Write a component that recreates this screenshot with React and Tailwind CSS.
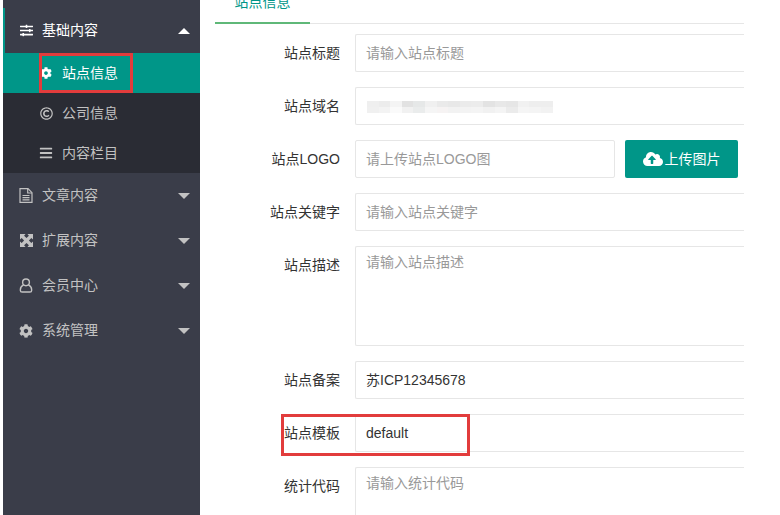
import React from "react";
import { FaSlidersH, FaCog, FaRegCopyright, FaBars, FaCloudUploadAlt } from "react-icons/fa";

function UserIcon({ size }) {
  return (
    <svg width={size} height={size} viewBox="0 0 14 16" fill="none" stroke="currentColor" strokeWidth="1.5">
      <circle cx="7" cy="4.6" r="3.6" />
      <path d="M4.4 7.4C2.4 8.4 1 10 1 12.2V13.2C1 14.3 1.8 15 2.8 15H11.2C12.2 15 13 14.3 13 13.2V12.2C13 10 11.6 8.4 9.6 7.4" />
    </svg>
  );
}

function FileIcon({ size }) {
  return (
    <svg width={size} height={size} viewBox="0 0 14 15" fill="none" stroke="currentColor" strokeWidth="1.2">
      <path d="M1 .7H9L13 4.7V14.3H1Z" />
      <path d="M8.7 .7V5H13M3.5 7.5H10.5M3.5 9.7H10.5M3.5 11.9H10.5" />
    </svg>
  );
}

function ExpandIcon({ size }) {
  return (
    <svg width={size} height={size} viewBox="0 0 14 14" fill="currentColor">
      <path d="M0 0H6L4.4 1.8 7 4.4 9.6 1.8 8 0H14V6L12.2 4.4 9.6 7 12.2 9.6 14 8V14H8L9.6 12.2 7 9.6 4.4 12.2 6 14H0V8L1.8 9.6 4.4 7 1.8 4.4 0 6Z" />
    </svg>
  );
}

function Caret({ up }) {
  return (
    <span className={`ml-auto mr-[10px] h-0 w-0 border-x-[6px] border-x-transparent ${up ? "border-b-[6px] border-b-white" : "border-t-[6px] border-t-[#c2c2c2]"}`} />
  );
}

function NavItem({ icon: Icon, label, up, size = 14 }) {
  return (
    <div className={`flex h-[45px] items-center pl-[16px] ${up ? "text-white" : "text-[#c2c2c2]"}`}>
      <span className="flex w-[14px] justify-center"><Icon size={size} /></span>
      <span className="ml-[9px]">{label}</span>
      <Caret up={up} />
    </div>
  );
}

function SubItem({ icon: Icon, label, active, size = 13 }) {
  return (
    <div className={`flex h-[40px] items-center pl-[36px] ${active ? "bg-[#009688] text-white" : "text-[#c2c2c2]"}`}>
      <span className="flex w-[14px] justify-center"><Icon size={size} /></span>
      <span className="ml-[9px]">{label}</span>
    </div>
  );
}

function Row({ label, children }) {
  return (
    <div className="flex">
      <div className="w-[125px] shrink-0 pt-[9px] text-right leading-[20px] text-[#333]">{label}</div>
      <div className="w-[15px] shrink-0" />
      {children}
    </div>
  );
}

function Input({ placeholder, value, className = "flex-1 rounded-l-[2px] border-r-0" }) {
  return (
    <div className={`flex h-[38px] items-center border border-[#e6e6e6] bg-white pl-[10px] ${className}`}>
      <span className={value ? "text-[#333]" : "text-[#999]"}>{value || placeholder}</span>
    </div>
  );
}

function Area({ placeholder }) {
  return (
    <div className="h-[100px] flex-1 rounded-l-[2px] border border-r-0 border-[#e6e6e6] bg-white pl-[10px] pt-[4px] leading-[22px] text-[#999]">
      {placeholder}
    </div>
  );
}

const topCells = ["bg-[#efefef]", "bg-[#ececec]", "bg-[#f4f4f4]", "bg-[#e2e2e2]", "bg-[#e6e8e8]", "bg-[#f0f0f0]", "bg-[#eaeaea]", "bg-[#e8e8e8]", "bg-[#ebebeb]", "bg-[#ececec]", "bg-[#e3e3e3]", "bg-[#e8e8e8]", "bg-[#e6e6e6]", "bg-[#f1f1f1]", "bg-[#eeeeee]", "bg-[#eeeeee]"];
const bottomCells = ["bg-[#f0f0f0]", "bg-[#f3f3f3]", "bg-[#fafafa]", "bg-[#f1f1f1]", "bg-[#eaecec]", "bg-[#f5f5f5]", "bg-[#f6f3f3]", "bg-[#f2f2f2]", "bg-[#f3f3f3]", "bg-[#f4f4f4]", "bg-[#f1f1f1]", "bg-[#f4f4f4]", "bg-[#ebebeb]", "bg-[#f5f5f5]", "bg-[#f4f4f4]", "bg-[#f2f2f2]"];

export default function App() {
  return (
    <div className="flex h-[515px] w-[780px] overflow-hidden bg-white text-[14px] [font-family:'Liberation_Sans','Noto_Sans_CJK_SC',sans-serif]">
      <aside className="relative ml-[3px] h-full w-[197px] shrink-0 bg-[#3a3d49] pt-[8px]">
        <span className="absolute left-0 top-[8px] h-[45px] w-[2px] bg-[#009688]" />
        <NavItem icon={FaSlidersH} label="基础内容" up size={13} />
        <div className="bg-[#2a2c34]">
          <div className="relative">
            <SubItem icon={FaCog} label="站点信息" active size={12} />
            <span className="absolute left-[36px] top-0 h-[40px] w-[94px] border-[3px] border-[#e23c3c]" />
          </div>
          <SubItem icon={FaRegCopyright} label="公司信息" size={13} />
          <SubItem icon={FaBars} label="内容栏目" size={14} />
        </div>
        <NavItem icon={FileIcon} label="文章内容" size={15} />
        <NavItem icon={ExpandIcon} label="扩展内容" size={13} />
        <NavItem icon={UserIcon} label="会员中心" size={15} />
        <NavItem icon={FaCog} label="系统管理" />
      </aside>

      <main className="ml-[15px] w-[529px] shrink-0">
        <div className="-mt-[17px] flex h-[41px] border-b border-[#e6e6e6]">
          <div className="h-[41px] w-[95px] border-b-2 border-[#5fb878] text-center leading-[38px] text-[#009688]">站点信息</div>
        </div>
        <div className="mt-[10px] flex flex-col gap-[15px]">
          <Row label="站点标题"><Input placeholder="请输入站点标题" /></Row>
          <Row label="站点域名">
            <div className="relative flex-1">
              <Input value="" placeholder="" className="w-full rounded-l-[2px] border-r-0" />
              <div className="absolute left-[12px] top-[14px] grid grid-cols-[repeat(16,11.6px)]">
                {topCells.map((c, i) => <span key={i} className={`h-[6px] ${c}`} />)}
                {bottomCells.map((c, i) => <span key={i} className={`h-[6px] ${c}`} />)}
              </div>
            </div>
          </Row>
          <Row label="站点LOGO">
            <Input placeholder="请上传站点LOGO图" className="w-[260px] rounded-[2px]" />
            <button className="ml-[10px] flex h-[38px] w-[113px] items-center justify-center rounded-[2px] bg-[#009688] text-white">
              <FaCloudUploadAlt size={20} />
              <span className="ml-[2px]">上传图片</span>
            </button>
          </Row>
          <Row label="站点关键字"><Input placeholder="请输入站点关键字" /></Row>
          <Row label="站点描述"><Area placeholder="请输入站点描述" /></Row>
          <Row label="站点备案"><Input value="苏ICP12345678" /></Row>
          <div className="relative">
            <Row label="站点模板"><Input value="default" /></Row>
            <span className="absolute left-[66px] top-0 h-[42px] w-[189px] border-[3px] border-[#e23c3c]" />
          </div>
          <Row label="统计代码"><Area placeholder="请输入统计代码" /></Row>
        </div>
      </main>
    </div>
  );
}
